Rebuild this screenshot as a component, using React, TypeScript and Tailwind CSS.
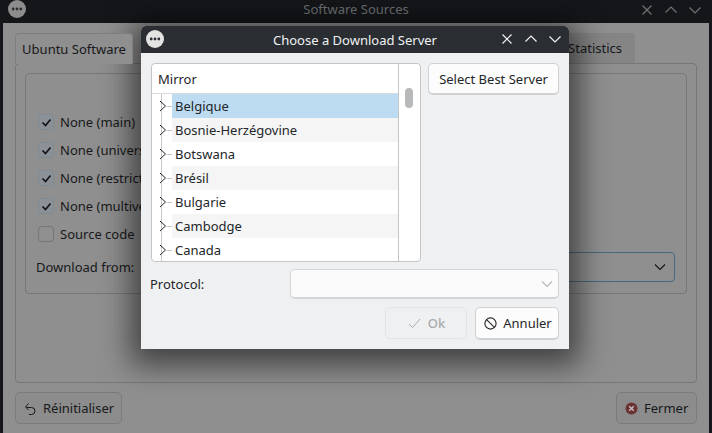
import React from "react";

const Dots = ({ size = 18 }: { size?: number }) => (
  <svg width={size} height={size} viewBox="0 0 18 18" className="shrink-0">
    <circle cx="9" cy="9" r="9" fill="currentColor" />
    <circle cx="5.2" cy="9" r="1.4" fill="#2a2e32" />
    <circle cx="9" cy="9" r="1.4" fill="#2a2e32" />
    <circle cx="12.8" cy="9" r="1.4" fill="#2a2e32" />
  </svg>
);

const WinButtons = ({ color, gap }: { color: string; gap: string }) => (
  <div className={`flex items-center ${gap}`}>
    <svg width="12" height="12" viewBox="0 0 12 12" fill="none" stroke={color} strokeWidth="1.2"><path d="M1.5 1.5l9 9M10.5 1.5l-9 9" /></svg>
    <svg width="12" height="12" viewBox="0 0 12 12" fill="none" stroke={color} strokeWidth="1.2"><path d="M0.5 8.5L6 3l5.5 5.5" /></svg>
    <svg width="12" height="12" viewBox="0 0 12 12" fill="none" stroke={color} strokeWidth="1.2"><path d="M0.5 3.5L6 9l5.5-5.5" /></svg>
  </div>
);

const Check = ({ checked, label }: { checked: boolean; label: string }) => (
  <div className="flex h-[28px] items-center gap-[6px]">
    <span className={`flex h-[16px] w-[16px] items-center justify-center rounded-[4px] border ${checked ? "border-[#7f8a94] bg-[#8c9197]" : "border-[#757575] bg-[#909090]"}`}>
      {checked && (
        <svg width="11" height="11" viewBox="0 0 11 11" fill="none" stroke="#131517" strokeWidth="1.7"><path d="M1.5 5.5l3 3 5-6" /></svg>
      )}
    </span>
    <span className="whitespace-nowrap">{label}</span>
  </div>
);

const countries = ["Belgique", "Bosnie-Herzégovine", "Botswana", "Brésil", "Bulgarie", "Cambodge", "Canada"];

const Row = ({ name, i }: { name: string; i: number }) => {
  const bg = i === 0 ? "bg-[#bddcf2]" : i % 2 === 1 ? "bg-[#f5f5f5]" : "bg-white";
  return (
    <div className="relative flex h-[24px] shrink-0 pl-[20px]">
      <div className="absolute left-[9px] top-0 h-full w-px bg-[#c8c8c8]" />
      <div className="absolute left-[15px] top-[12px] h-px w-[5px] bg-[#c8c8c8]" />
      <svg className="absolute left-[6px] top-[6px]" width="10" height="12" viewBox="0 0 10 12" fill="none" stroke="#232629" strokeWidth="1"><path d="M2 1l5.5 5L2 11" /></svg>
      <div className={`flex h-full flex-1 items-center pl-[3px] ${bg}`}>{name}</div>
    </div>
  );
};

export default function App() {
  return (
    <div className="flex h-[433px] w-[712px] flex-col overflow-hidden bg-[#14161a] text-[13px] leading-[18px] text-[#232629] [font-family:'Noto_Sans',sans-serif]">
      <div className="relative flex h-[23px] shrink-0 items-center justify-center pb-[5px] text-[#6f7173]">
        <span className="absolute left-[8px] top-[0px] text-[#8d8d8d]"><Dots /></span>
        <span>Software Sources</span>
        <span className="absolute right-[11px] top-[4px]"><WinButtons color="#6f7173" gap="gap-[12px]" /></span>
      </div>

      <div className="relative mx-[3px] flex flex-1 flex-col bg-[#8f8f8f] px-[12px] pt-[10px] text-[#17191b]">
        <div className="flex h-[31px] shrink-0">
          <div className="relative z-10 flex h-[31px] w-[118px] items-center justify-center rounded-t-[4px] border border-b-0 border-[#7a7f84] bg-[#8f8f8f]">Ubuntu Software</div>
          <div className="flex flex-1 justify-end pr-[62px]">
            <div className="flex h-[30px] w-[110px] items-center justify-end rounded-t-[4px] bg-[#858585] pr-[13px]">Statistics</div>
          </div>
        </div>
        <div className="-mt-px flex h-[320px] shrink-0 flex-col rounded-[4px] border border-[#777] p-[9px] pb-[88px]">
          <div className="flex flex-1 flex-col rounded-[4px] border border-[#777] pl-[12px] pr-[11px] pt-[34px]">
            <Check checked label="None (main)" />
            <Check checked label="None (universe)" />
            <Check checked label="None (restricted)" />
            <Check checked label="None (multiverse)" />
            <Check checked={false} label="Source code" />
            <div className="mt-[4px] flex items-center justify-between">
              <span className="-ml-[2px]">Download from:</span>
              <div className="flex h-[30px] w-[340px] items-center justify-end rounded-[4px] border border-[#47687f] pr-[8px]">
                <svg width="12" height="8" viewBox="0 0 12 8" fill="none" stroke="#131517" strokeWidth="1.1"><path d="M1 1.5l5 5 5-5" /></svg>
              </div>
            </div>
          </div>
        </div>
        <div className="mt-[9px] flex justify-between">
          <div className="flex h-[32px] w-[107px] items-center gap-[7px] rounded-[5px] border border-[#7b7b7b] bg-[#8c8c8c] pl-[8px]">
            <svg width="12" height="13" viewBox="0 0 12 13" fill="none" stroke="#17191b" strokeWidth="1"><path d="M2.5 5.5H7.5a3.5 3.5 0 1 1 0 7H5M4.5 1.5l-3 3.5 3 3" /></svg>
            <span>Réinitialiser</span>
          </div>
          <div className="flex h-[32px] w-[81px] items-center gap-[6px] rounded-[5px] border border-[#7b7b7b] bg-[#8c8c8c] pl-[8px]">
            <svg width="13" height="13" viewBox="0 0 13 13"><circle cx="6.5" cy="6.5" r="6" fill="#6b3234" /><path d="M4.2 4.2l4.6 4.6M8.8 4.2l-4.6 4.6" stroke="#c9bcbc" strokeWidth="1.4" /></svg>
            <span>Fermer</span>
          </div>
        </div>
      </div>

      {/* Modal dialog */}
      <div className="absolute left-[141px] top-[26px] flex h-[323px] w-[428px] flex-col overflow-hidden rounded-t-[5px] bg-[#eff0f1] shadow-[0_6px_30px_10px_rgba(0,0,0,0.55)]">
        <div className="relative flex h-[27px] shrink-0 items-center justify-center bg-[#2a2e32] text-[#f0f1f2]">
          <span className="absolute left-[5px] top-[4px] text-[#e3e3e3]"><Dots /></span>
          <span>Choose a Download Server</span>
          <span className="absolute right-[8px] top-[7px]"><WinButtons color="#f0f1f2" gap="gap-[12px]" /></span>
        </div>
        <div className="flex flex-1 flex-col px-[10px] pt-[10px]">
          <div className="flex gap-[7px]">
            <div className="flex h-[199px] w-[270px] overflow-hidden rounded-[4px] border border-[#c3c5c7] bg-white">
              <div className="flex w-[247px] flex-col overflow-hidden border-r border-[#c3c5c7]">
                <div className="flex h-[30px] shrink-0 items-center border-b border-[#d8dadc] pl-[6px]">Mirror</div>
                {countries.map((c, i) => <Row key={c} name={c} i={i} />)}
              </div>
              <div className="flex-1 pl-[6px] pt-[24px]">
                <div className="h-[20px] w-[8px] rounded-[4px] bg-[#b8b9ba]" />
              </div>
            </div>
            <button className="flex h-[32px] w-[131px] items-center justify-center rounded-[5px] border border-[#cfd1d3] border-b-[2px] bg-[#fcfcfc]">Select Best Server</button>
          </div>
          <div className="mt-[7px] flex items-center justify-between">
            <span className="-ml-px">Protocol:</span>
            <div className="flex h-[30px] w-[269px] items-center justify-end rounded-[5px] border border-[#d3d5d7] border-b-[2px] bg-[#fbfbfb] pr-[5px]">
              <svg width="12" height="8" viewBox="0 0 12 8" fill="none" stroke="#b4b6b8" strokeWidth="1.1"><path d="M1 1.5l5 5 5-5" /></svg>
            </div>
          </div>
          <div className="mt-[8px] flex justify-end gap-[8px]">
            <button className="flex h-[32px] w-[82px] items-center justify-center gap-[7px] rounded-[5px] border border-[#e2e4e6] bg-[#eff0f1] pl-[1px] text-[#a9abad]">
              <svg width="13" height="11" viewBox="0 0 13 11" fill="none" stroke="#a9abad" strokeWidth="1"><path d="M1 6l3.5 3.5L12 1" /></svg>
              <span className="font-medium">Ok</span>
            </button>
            <button className="flex h-[33px] w-[84px] items-center justify-center gap-[6px] rounded-[5px] border border-[#cfd1d3] border-b-[2px] bg-[#fcfcfc] pl-[2px]">
              <svg width="13" height="13" viewBox="0 0 13 13" fill="none" stroke="#232629" strokeWidth="1.1"><circle cx="6.5" cy="6.5" r="5.6" /><path d="M2.6 2.6l7.8 7.8" /></svg>
              <span>Annuler</span>
            </button>
          </div>
        </div>
      </div>
    </div>
  );
}
